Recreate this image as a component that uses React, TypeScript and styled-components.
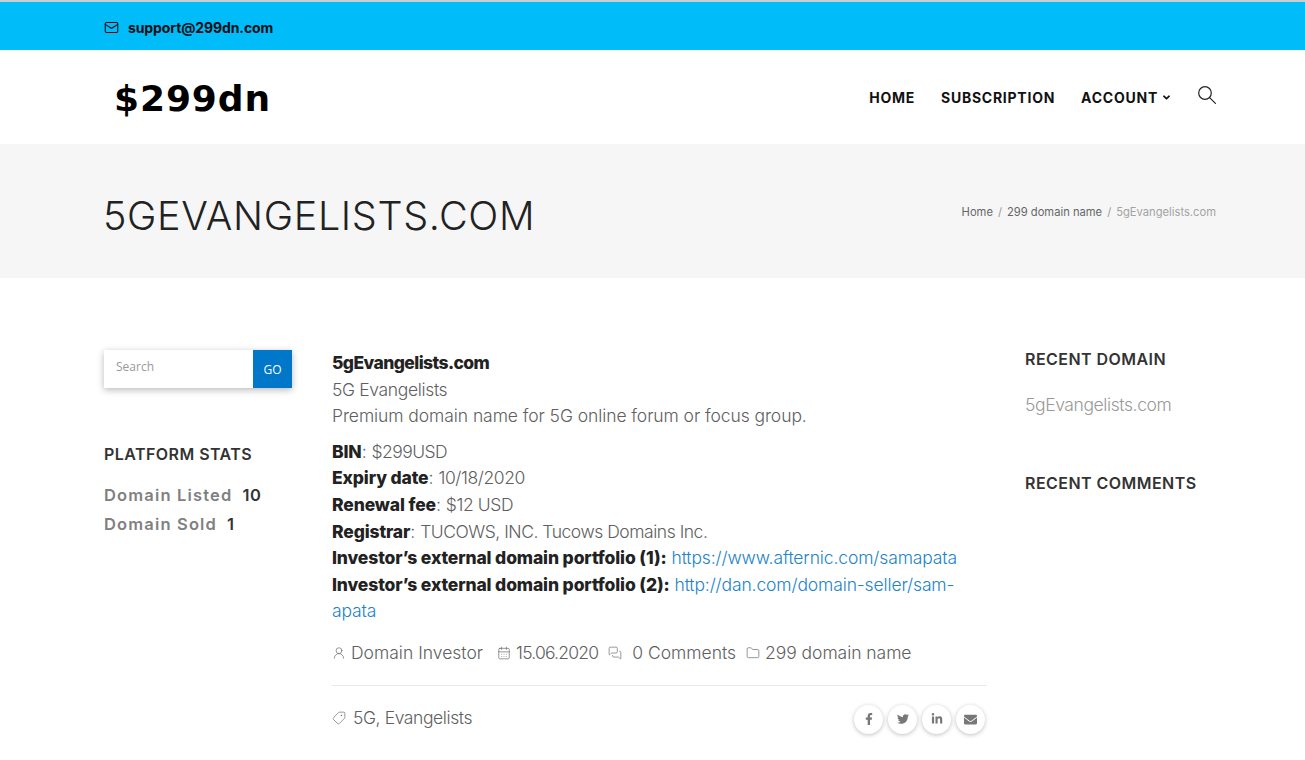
import React from 'react';
import styled, { createGlobalStyle } from 'styled-components';
import { Mail, UserRound, CalendarDays, MessagesSquare, Folder, Tag } from 'lucide-react';
import { FaFacebookF, FaTwitter, FaLinkedinIn, FaEnvelope, FaAngleDown } from 'react-icons/fa';

const Global = createGlobalStyle`
  html, body { margin: 0; padding: 0; background: #fff; }
  body { font-family: Inter, "Liberation Sans", sans-serif; color: #777; overflow: hidden; }
  a { text-decoration: none; color: inherit; }
`;
const Page = styled.div`height: 760px; overflow: hidden;`;
const TopBar = styled.div`
  height: 46px; background: #00bcf8; border-top: 2px solid #c9ced0;
  padding: 2px 104px 0; display: flex; align-items: center; gap: 9px;
  font-size: 14px; font-weight: 700; color: #0a0f14; letter-spacing: -0.1px;
`;
const Header = styled.header`
  height: 94px; padding: 0 89px 0 104px; display: flex; align-items: center; justify-content: space-between;
`;
const Logo = styled.div`
  font-family: "DejaVu Sans", sans-serif; font-weight: 700; font-size: 36px; color: #000;
  letter-spacing: 0.9px; padding-left: 10px; margin-top: 3px;
`;
const Nav = styled.nav`display: flex; align-items: center;`;
const NavItem = styled.a`
  font-size: 14px; font-weight: 700; color: #111; letter-spacing: 0.75px; margin-right: 26px;
  display: flex; align-items: center; gap: 3px;
`;
const SearchBtn = styled.span`display: flex; margin-top: -4px; color: #222;`;
const Band = styled.div`
  height: 134px; background: #f6f6f6; padding: 0 89px 0 104px; display: flex; align-items: center; justify-content: space-between;
`;
const Title = styled.h1`
  margin: 12px 0 0 -1px; font-size: 39.5px; font-weight: 300; color: #222; letter-spacing: 0.65px; line-height: 1;
`;
const Crumbs = styled.div`
  font-size: 11.2px; display: flex; gap: 5px; color: #666; margin-top: 1px; font-weight: 400;
`;
const CrumbLast = styled.span`color: #a3a3a3;`;
const Sep = styled.span`color: #999;`;
const Main = styled.main`
  display: grid; grid-template-columns: 188px 655px 191px; column-gap: 40px; padding: 72px 0 0 104px;
`;
const LeftCol = styled.aside``;
const SearchBox = styled.div`
  display: flex; height: 38px; box-shadow: 0 2px 7px rgba(0,0,0,.28); background: #fff; margin-bottom: 56px;
`;
const SearchInput = styled.div`
  flex: 1; padding: 8px 12px 0; font-family: "Open Sans", sans-serif; font-size: 12px; color: #999; height: 30px;
`;
const GoButton = styled.div`
  width: 39px; background: #0077c8; color: #fff; font-family: "Open Sans", sans-serif; font-size: 12px;
  display: flex; align-items: center; justify-content: center;
`;
const WidgetTitle = styled.h3`
  margin: 0; font-size: 16px; font-weight: 600; color: #333; letter-spacing: 0.45px; line-height: 20px;
`;
const Stats = styled.div`margin-top: 21px; display: flex; flex-direction: column; gap: 9px;`;
const Stat = styled.div`
  font-size: 16.5px; font-weight: 600; color: #808080; letter-spacing: 1.16px; line-height: 20px;
  display: flex; gap: 10px;
`;
const StatValue = styled.span`color: #333; letter-spacing: 0.7px;`;
const Content = styled.article`font-size: 17.5px; font-weight: 300; color: #606060; line-height: 26.6px;`;
const Para = styled.p`margin: 0 0 9px;`;
const Strong = styled.strong<{ $tight?: boolean }>`
  font-weight: 800; color: #222; letter-spacing: ${p => (p.$tight ? '-0.58px' : '-0.13px')};
`;
const Snug = styled.span<{ $ls: number }>`letter-spacing: ${p => p.$ls}px;`;
const Link = styled.a`color: #2283c9; letter-spacing: -0.13px;`;
const Meta = styled.div`
  display: flex; align-items: center; margin-top: 15px; padding-bottom: 18px; border-bottom: 1px solid #e8e8e8;
`;
const MetaItem = styled.span<{ $gap: number; $after: number }>`
  display: inline-flex; align-items: center; gap: ${p => p.$gap}px; margin-right: ${p => p.$after}px;
`;
const Bottom = styled.div`display: flex; align-items: center; justify-content: space-between; padding: 17px 2px 0 0;`;
const Tags = styled.span`display: inline-flex; align-items: center; gap: 7px; letter-spacing: -0.4px;`;
const Share = styled.div`display: flex; gap: 5px; margin-top: 2px;`;
const ShareBtn = styled.a`
  width: 29px; height: 29px; border-radius: 50%; background: #fff; box-shadow: 0 1px 4px rgba(0,0,0,.25);
  display: flex; align-items: center; justify-content: center; color: #777; font-size: 12px;
`;
const RightCol = styled.aside`margin: -1px 0 0 -2px;`;
const RecentLink = styled.a`
  display: block; margin: 23px 0 55px; font-size: 17.5px; font-weight: 300; color: #999; line-height: 26px; letter-spacing: -0.4px;
`;

export default function App() {
  return (
    <Page>
      <Global />
      <TopBar><Mail size={15} strokeWidth={1.7} />support@299dn.com</TopBar>
      <Header>
        <Logo>$299dn</Logo>
        <Nav>
          <NavItem>HOME</NavItem>
          <NavItem>SUBSCRIPTION</NavItem>
          <NavItem>ACCOUNT <FaAngleDown size={11} /></NavItem>
          <SearchBtn>
            <svg width="18" height="18" viewBox="0 0 18 18" fill="none" stroke="currentColor" strokeWidth="1.2" strokeLinecap="round">
              <circle cx="7" cy="7" r="6.3" />
              <path d="M11.6 11.6 17.4 17.4" />
            </svg>
          </SearchBtn>
        </Nav>
      </Header>
      <Band>
        <Title>5GEVANGELISTS.COM</Title>
        <Crumbs>
          <a>Home</a><Sep>/</Sep><a>299 domain name</a><Sep>/</Sep><CrumbLast>5gEvangelists.com</CrumbLast>
        </Crumbs>
      </Band>
      <Main>
        <LeftCol>
          <SearchBox>
            <SearchInput>Search</SearchInput>
            <GoButton>GO</GoButton>
          </SearchBox>
          <WidgetTitle>PLATFORM STATS</WidgetTitle>
          <Stats>
            <Stat>Domain Listed <StatValue>10</StatValue></Stat>
            <Stat>Domain Sold <StatValue>1</StatValue></Stat>
          </Stats>
        </LeftCol>
        <Content>
          <Para>
            <Strong $tight>5gEvangelists.com</Strong><br />
            <Snug $ls={-0.35}>5G Evangelists</Snug><br />
            <Snug $ls={-0.08}>Premium domain name for 5G online forum or focus group.</Snug>
          </Para>
          <Para>
            <Strong>BIN</Strong>: <Snug $ls={-0.55}>$299USD</Snug><br />
            <Strong>Expiry date</Strong>: <Snug $ls={-0.4}>10/18/2020</Snug><br />
            <Strong>Renewal fee</Strong>: <Snug $ls={-0.4}>$12 USD</Snug><br />
            <Strong>Registrar</Strong>: <Snug $ls={-0.47}>TUCOWS, INC. Tucows Domains Inc.</Snug><br />
            <Strong>Investor’s external domain portfolio (1):</Strong> <Link>https://www.afternic.com/samapata</Link><br />
            <Strong>Investor’s external domain portfolio (2):</Strong> <Link>http://dan.com/domain-seller/sam-</Link><br />
            <Link>apata</Link>
          </Para>
          <Meta>
            <MetaItem $gap={5} $after={14}><UserRound size={14} strokeWidth={1.1} />Domain Investor</MetaItem>
            <MetaItem $gap={5} $after={10}><CalendarDays size={14} strokeWidth={1.1} /><Snug $ls={-0.8}>15.06.2020</Snug></MetaItem>
            <MetaItem $gap={10} $after={10}><MessagesSquare size={14} strokeWidth={1.1} />0 Comments</MetaItem>
            <MetaItem $gap={5} $after={0}><Folder size={14} strokeWidth={1.1} /><Snug $ls={-0.05}>299 domain name</Snug></MetaItem>
          </Meta>
          <Bottom>
            <Tags><Tag size={14} strokeWidth={1.1} style={{ transform: 'scaleX(-1)' }} />5G, Evangelists</Tags>
            <Share>
              <ShareBtn><FaFacebookF /></ShareBtn>
              <ShareBtn><FaTwitter /></ShareBtn>
              <ShareBtn><FaLinkedinIn /></ShareBtn>
              <ShareBtn><FaEnvelope size={13} /></ShareBtn>
            </Share>
          </Bottom>
        </Content>
        <RightCol>
          <WidgetTitle>RECENT DOMAIN</WidgetTitle>
          <RecentLink>5gEvangelists.com</RecentLink>
          <WidgetTitle>RECENT COMMENTS</WidgetTitle>
        </RightCol>
      </Main>
    </Page>
  );
}
